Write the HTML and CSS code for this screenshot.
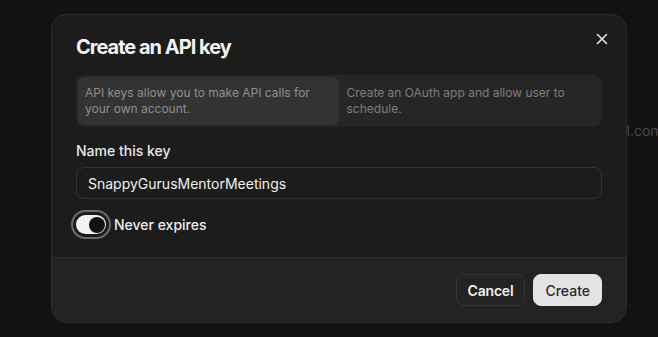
FILE: index.html
```html
<!DOCTYPE html>
<html>
<head>
  <title>Create an API key</title>
  <link rel="stylesheet" href="styles.css">
</head>
<body>

<div class="backdrop-text">mail.com</div>

<div class="overlay">
  <div class="dialog">
    <div class="dialog-body">
      <button class="close-btn" title="Close">
        <svg width="12" height="12" viewBox="0 0 12 12">
          <path d="M1.5 1.5 L10.5 10.5 M10.5 1.5 L1.5 10.5" stroke="#e5e5e5" stroke-width="1.6" stroke-linecap="round"/>
        </svg>
      </button>

      <h2>Create an API key</h2>

      <div class="tabs">
        <div class="tab active">API keys allow you to make API calls for your own account.</div>
        <div class="tab">Create an OAuth app and allow user to schedule.</div>
      </div>

      <label class="field-label" for="key-name">Name this key</label>
      <input id="key-name" class="text-input" type="text" value="SnappyGurusMentorMeetings">

      <label class="switch-row">
        <span class="switch"><span class="thumb"></span></span>
        Never expires
      </label>
    </div>

    <div class="dialog-footer">
      <button class="btn btn-cancel">Cancel</button>
      <button class="btn btn-create">Create</button>
    </div>
  </div>
</div>

</body>
</html>
```

FILE: styles.css
```css
body {
  font-family: 'Inter', sans-serif;
  background-color: #121212;
  margin: 0;
  height: 337px;
  overflow: hidden;
  color: #ededed;
}

.backdrop-text {
  position: absolute;
  top: 122px;
  left: 603px;
  font-size: 14px;
  color: #4a4a4a;
}

.overlay {
  position: relative;
  padding: 14px 0 0 51px;
}

.dialog {
  width: 574px;
  background: #1c1c1c;
  border: 1px solid #2c2c2c;
  border-radius: 16px;
  overflow: hidden;
}

.dialog-body {
  position: relative;
  padding: 18px 24px 20px;
}

.close-btn {
  position: absolute;
  top: 18px;
  right: 18px;
  width: 12px;
  height: 12px;
  padding: 0;
  border: none;
  background: transparent;
  cursor: pointer;
  display: flex;
}

h2 {
  margin: 0 0 14px;
  font-size: 20px;
  line-height: 28px;
  font-weight: 700;
  letter-spacing: -1px;
  color: #f2f2f2;
}

.tabs {
  display: grid;
  grid-template-columns: 1fr 1fr;
  gap: 1px;
  padding: 2px;
  background: #262626;
  border-radius: 9px;
}

.tab {
  padding: 8px 7px;
  font-size: 12px;
  line-height: 16px;
  color: #7e7e7e;
  border-radius: 7px;
}

.tab.active {
  background: #333333;
  color: #8f8f8f;
}

.field-label {
  display: block;
  margin-top: 14px;
  font-size: 14px;
  line-height: 20px;
  font-weight: 500;
  color: #e8e8e8;
}

.text-input {
  display: block;
  box-sizing: border-box;
  width: 100%;
  height: 32px;
  margin-top: 6px;
  padding: 0 11px;
  font-family: 'Inter', sans-serif;
  font-size: 14px;
  color: #f0f0f0;
  background: #1c1c1c;
  border: 1px solid #333333;
  border-radius: 8px;
  outline: none;
}

.switch-row {
  display: flex;
  align-items: center;
  gap: 5px;
  margin-top: 13px;
  margin-left: -3px;
  font-size: 14px;
  font-weight: 500;
  color: #ececec;
}

.switch {
  display: flex;
  align-items: center;
  justify-content: flex-end;
  box-sizing: border-box;
  width: 36px;
  height: 25px;
  padding: 0 4px;
  background: #f2f2f2;
  border: 3px solid #1c1c1c;
  border-radius: 13px;
  box-shadow: 0 0 0 2px #6b6b6b;
}

.thumb {
  width: 16px;
  height: 16px;
  margin-right: -3px;
  border-radius: 50%;
  background: #111111;
}

.dialog-footer {
  display: flex;
  justify-content: flex-end;
  gap: 8px;
  padding: 16px 24px 16px;
  background: #232323;
  border-top: 1px solid #2e2e2e;
}

.btn {
  height: 32px;
  padding: 0 11px;
  font-family: 'Inter', sans-serif;
  font-size: 14px;
  border-radius: 8px;
  cursor: pointer;
}

.btn-cancel {
  background: #232323;
  color: #f0f0f0;
  font-weight: 600;
  letter-spacing: -0.2px;
  border: 1px solid #353535;
}

.btn-create {
  background: #e3e3e3;
  color: #2a2a2a;
  font-weight: 500;
  border: 1px solid #e3e3e3;
}
```
